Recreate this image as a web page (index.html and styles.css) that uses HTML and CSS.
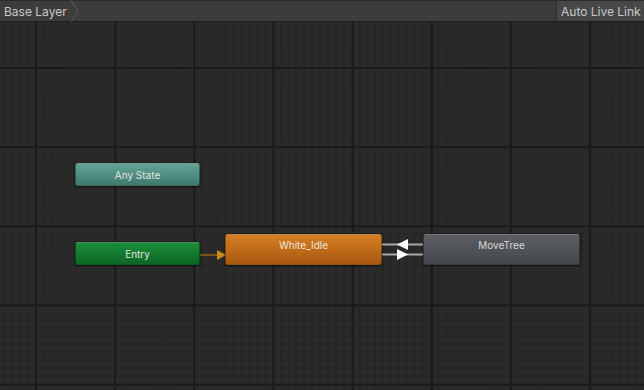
FILE: index.html
```html
<!DOCTYPE html>
<html>
	<head>
		<meta charset="UTF-8" />
		<title>Animator</title>
		<link rel="stylesheet" href="styles.css">
	</head>
	<body>
		<header class="toolbar">
			<div class="crumb">
				<span>Base Layer</span>
				<svg class="crumb-arrow" width="10" height="22" viewBox="0 0 10 22">
					<path d="M0 0 L7 11 L0 22" fill="#3c3c3c" stroke="#5a5a5a" stroke-width="1" />
				</svg>
			</div>
			<div class="spacer"></div>
			<button class="live-link">Auto Live Link</button>
		</header>
		<main class="graph">
			<svg class="links" width="644" height="368" viewBox="0 22 644 368">
				<!-- entry -> idle -->
				<line x1="200" y1="255" x2="218" y2="255" stroke="#7a5418" stroke-width="2" />
				<path d="M217 250 L226 255 L217 260 Z" fill="#c88a14" />
				<!-- idle <-> movetree -->
				<line x1="382" y1="244.5" x2="423" y2="244.5" stroke="#a8a8a8" stroke-width="2" />
				<line x1="382" y1="254.5" x2="423" y2="254.5" stroke="#a8a8a8" stroke-width="2" />
				<path d="M397 244.5 L408 239 L408 250 Z" fill="#ffffff" />
				<path d="M408 254.5 L397 249 L397 260 Z" fill="#ffffff" />
			</svg>
			<div class="node any-state" style="left:75px;top:141px;">Any State</div>
			<div class="node entry" style="left:75px;top:220px;">Entry</div>
			<div class="node state default" style="left:225px;top:212px;">White_Idle</div>
			<div class="node state" style="left:423px;top:212px;">MoveTree</div>
		</main>
	</body>
</html>
```

FILE: styles.css
```css
* {
	margin: 0;
	padding: 0;
	box-sizing: border-box;
}
body {
	width: 644px;
	height: 390px;
	overflow: hidden;
	background-color: #282828;
	font-family: Inter, "Noto Sans", sans-serif;
}
.toolbar {
	height: 22px;
	display: flex;
	align-items: stretch;
	background-color: #3c3c3c;
	border-top: 1px solid #2b2b2b;
	border-bottom: 1px solid #1e1e1e;
}
.crumb {
	display: flex;
	align-items: center;
	color: #c8c8c8;
	font-size: 12px;
}
.crumb span {
	padding-left: 4px;
	padding-right: 4px;
}
.crumb-arrow {
	display: block;
	margin-top: -1px;
}
.spacer {
	flex: 1;
}
.live-link {
	width: 88px;
	border: none;
	border-left: 1px solid #2e2e2e;
	background-color: #474747;
	color: #c8c8c8;
	font-family: Inter, "Noto Sans", sans-serif;
	font-size: 12px;
	text-align: left;
	padding-left: 4px;
}
.graph {
	position: relative;
	height: 368px;
	background-color: #2a2a2a;
	background-image:
		linear-gradient(to right, #1a1a1a 2px, transparent 2px),
		linear-gradient(to bottom, #1a1a1a 2px, transparent 2px),
		linear-gradient(to right, #232323 1px, transparent 1px),
		linear-gradient(to bottom, #232323 1px, transparent 1px);
	background-size: 79.2px 79.2px, 79.2px 79.2px, 7.92px 7.92px, 7.92px 7.92px;
	background-position: 35px 45px, 35px 45px, 35px 45px, 35px 45px;
}
.links {
	position: absolute;
	left: 0;
	top: 0;
}
.node {
	position: absolute;
	width: 125px;
	height: 23px;
	border-radius: 3px;
	color: #e4e4e4;
	font-size: 10px;
	text-align: center;
	line-height: 22px;
	box-shadow: 0 1px 2px rgba(0, 0, 0, 0.6);
	border: 1px solid rgba(0, 0, 0, 0.35);
	border-top-color: rgba(255, 255, 255, 0.25);
}
.any-state {
	background: linear-gradient(to bottom, #62a396, #3e7a6d);
}
.entry {
	background: linear-gradient(to bottom, #1a8e3a, #0c6624);
}
.state {
	width: 157px;
	height: 31px;
	line-height: 20px;
	background: linear-gradient(to bottom, #5a5d62, #45484c);
	color: #d8d8d8;
}
.state.default {
	background: linear-gradient(to bottom, #d67e22, #a85810);
	color: #f0e6dc;
}
```
